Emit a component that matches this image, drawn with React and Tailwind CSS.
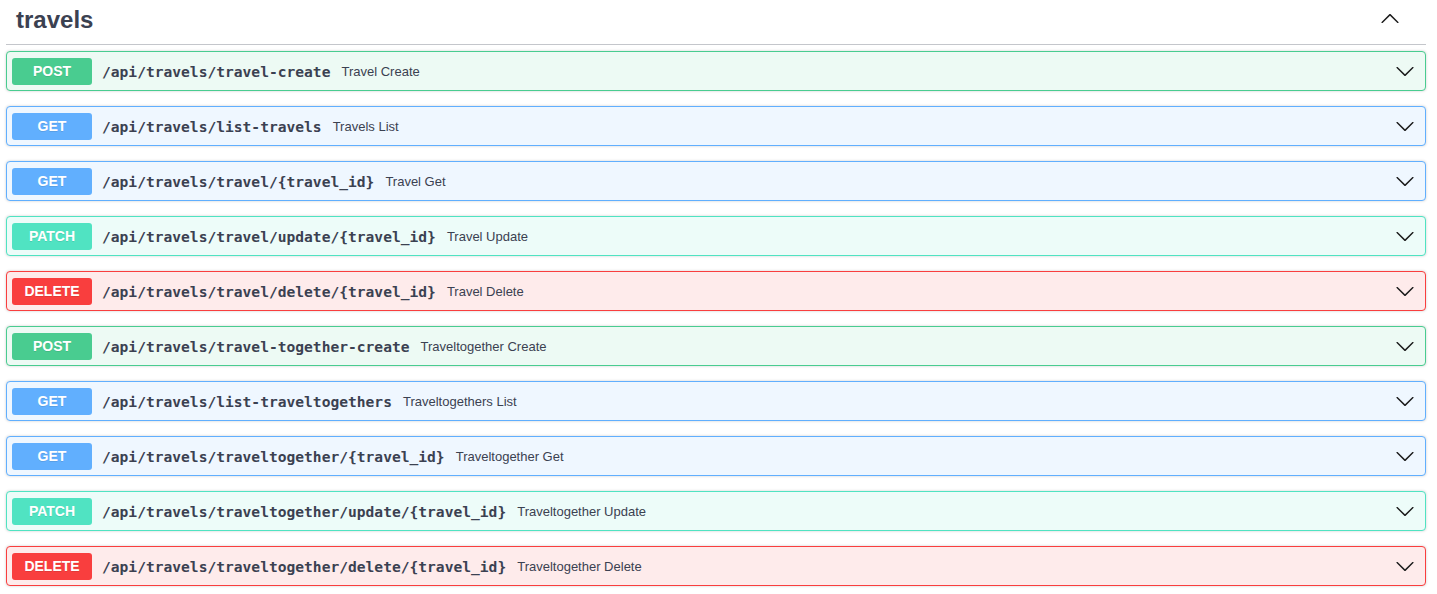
const ops = [
  { method: "POST", path: "/api/travels/travel-create", summary: "Travel Create" },
  { method: "GET", path: "/api/travels/list-travels", summary: "Travels List" },
  { method: "GET", path: "/api/travels/travel/{travel_id}", summary: "Travel Get" },
  { method: "PATCH", path: "/api/travels/travel/update/{travel_id}", summary: "Travel Update" },
  { method: "DELETE", path: "/api/travels/travel/delete/{travel_id}", summary: "Travel Delete" },
  { method: "POST", path: "/api/travels/travel-together-create", summary: "Traveltogether Create" },
  { method: "GET", path: "/api/travels/list-traveltogethers", summary: "Traveltogethers List" },
  { method: "GET", path: "/api/travels/traveltogether/{travel_id}", summary: "Traveltogether Get" },
  { method: "PATCH", path: "/api/travels/traveltogether/update/{travel_id}", summary: "Traveltogether Update" },
  { method: "DELETE", path: "/api/travels/traveltogether/delete/{travel_id}", summary: "Traveltogether Delete" },
];

const styles = {
  POST: { block: "border-[#49cc90] bg-[#edfaf4]", badge: "bg-[#49cc90]" },
  GET: { block: "border-[#61affe] bg-[#eff7ff]", badge: "bg-[#61affe]" },
  PATCH: { block: "border-[#50e3c2] bg-[#edfcf9]", badge: "bg-[#50e3c2]" },
  DELETE: { block: "border-[#f93e3e] bg-[#feebeb]", badge: "bg-[#f93e3e]" },
};

function Arrow({ up }) {
  return (
    <svg width="20" height="20" viewBox="0 0 20 20" className={up ? "rotate-180" : ""} fill="#1b1b1b">
      <path d="M17.418 6.109c.272-.268.709-.268.979 0s.271.701 0 .969l-7.908 7.83c-.27.268-.707.268-.979 0l-7.908-7.83c-.27-.268-.27-.701 0-.969.271-.268.709-.268.979 0L10 13.25l7.418-7.141z" />
    </svg>
  );
}

export default function App() {
  return (
    <div className="min-h-screen bg-white pl-[6px] pr-[11px] text-[#3b4151] font-['Liberation_Sans',Arial,sans-serif]">
      {/* Tag header */}
      <div className="flex items-center justify-between h-[45px] pl-[10px] pr-[26px] pb-[4px] border-b border-[#c4c6cb] mb-[6px]">
        <h3 className="text-[24px] leading-[24px] font-bold">travels</h3>
        <div className="mb-[2px]">
          <Arrow up />
        </div>
      </div>

      {/* Operations */}
      {ops.map((op, i) => (
        <div
          key={i}
          className={`flex items-center h-[40px] px-[5px] mb-[15px] border rounded-[4px] shadow-[0_0_3px_rgba(0,0,0,0.19)] ${styles[op.method].block}`}
        >
          <span
            className={`w-[80px] h-[27px] flex items-center justify-center rounded-[3px] text-white text-[14px] font-bold [text-shadow:0_1px_0_rgba(0,0,0,0.1)] ${styles[op.method].badge}`}
          >
            {op.method}
          </span>
          <span className="pl-[10px] pr-[11px] pt-[1px] text-[14.6px] font-bold font-['DejaVu_Sans_Mono',monospace] text-[#3b4151]">
            {op.path}
          </span>
          <span className="text-[13px] pt-[1px] text-[#3b4151] flex-1">{op.summary}</span>
          <div className="pr-[5px]">
            <Arrow />
          </div>
        </div>
      ))}
    </div>
  );
}
